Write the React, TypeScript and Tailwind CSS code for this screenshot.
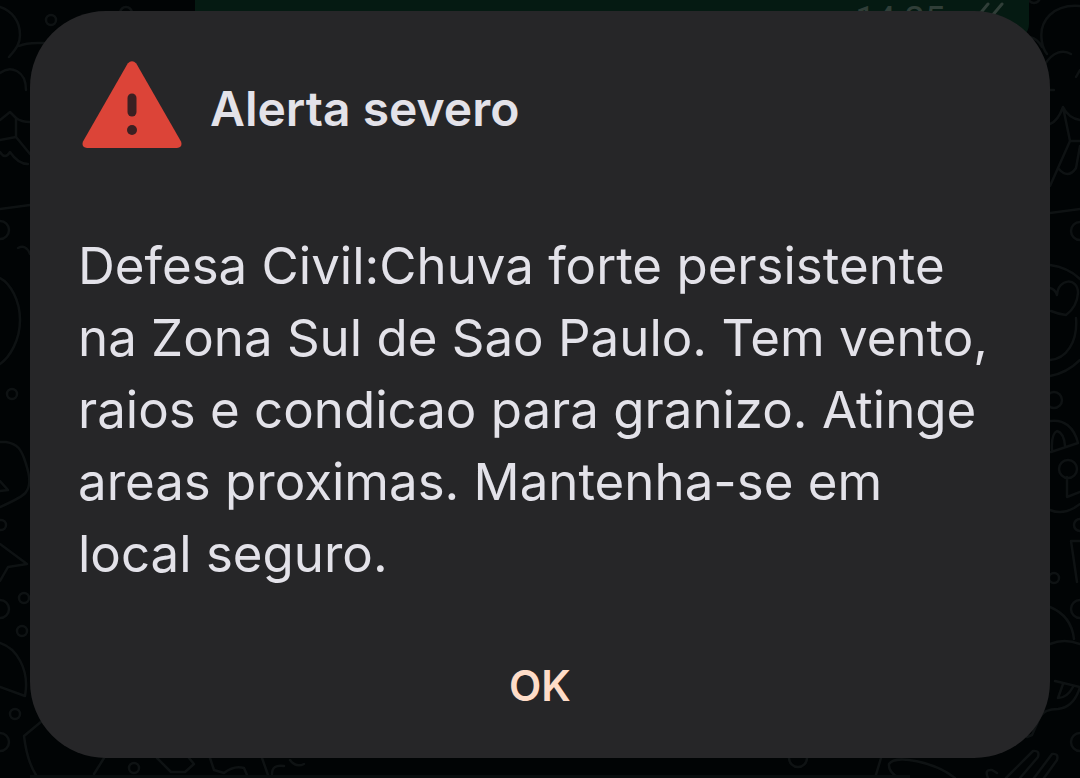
const message =
  "Defesa Civil:Chuva forte persistente na Zona Sul de Sao Paulo. Tem vento, raios e condicao para granizo. Atinge areas proximas. Mantenha-se em local seguro.";

function Wallpaper() {
  return (
    <svg
      className="absolute inset-0 h-full w-full"
      viewBox="0 0 1080 778"
      preserveAspectRatio="xMidYMid slice"
      fill="none"
      stroke="#0e1213"
      strokeWidth="2.5"
      strokeLinecap="round"
      strokeLinejoin="round"
      aria-hidden="true"
    >
      {/* left edge */}
      <path d="M0 7c12 4 20 14 20 28 0 8-3 13-11 22M19 46c8-4 16-3 26-3M0 73c10-8 26-3 26 17" />
      <path d="M0 120l10-8 6 6c4 3 8 4 14 4M16 118v19l14 17M0 140l16-3M0 152q5 8 10 0c4 6 10 12 18 12" />
      <path d="M0 209l30-4M18 248q8-4 12 6M0 278c10 5 20 22 20 42s-10 37-20 44" />
      <path d="M0 442h6c12 2 15 8 18 16 5 14 8 26 2 34q-3 5-26 15M0 481l8 9-8 1M0 544l27 20-19 3-8 14" />
      <path d="M0 643c16 5 30 26 25 53L0 687M42 721l-18 15q3 25 12 39" />
      <circle cx="51" cy="20" r="5" />
      <circle cx="126" cy="13" r="6" />
      <circle cx="0" cy="230" r="9" />
      <circle cx="12" cy="394" r="5" />
      <circle cx="1" cy="525" r="5" />
      <circle cx="24" cy="598" r="5" />
      <circle cx="0" cy="609" r="9" />
      <circle cx="22" cy="631" r="5" />
      <circle cx="15" cy="714" r="5" />
      <circle cx="0" cy="742" r="9" />
      {/* bottom edge */}
      <path d="M104 758l-10 16M157 758l14 14h14l9-8-5-6M210 758l4 12 10 3q10-8 20-5l3 7M262 758l6 17M272 774q0-10 12-8M290 760q6 8 14 4" />
      <path d="M881 758l-6 20M955 778c-20-16-60-24-66-14q-1 8 10 14M988 778q-4-9 4-8l5 3M1006 778l27-27q7-1 5 6l-18 21M1034 778l18-24q7-1 5 6l-13 18" />
      <circle cx="134" cy="768" r="5" />
      <circle cx="798" cy="758" r="9" />
      {/* right edge */}
      <path d="M1080 6c-26-2-42 14-38 36q1 7 5 12M1030 37q8 2 12 10M1045 64c8-12 18-15 26-10M1080 70l-4 7M1050 90h4" />
      <path d="M1050 124q8-3 13-17c4 8 10 12 17 13M1063 107l7 34h10M1070 141l-20 45M1058 168q10 12 18 0l4-22M1050 213l30-4" />
      <path d="M1050 265c14 2 24 8 30 14M1050 376c12-2 22-8 30-16M1050 360c16-1 28-18 26-42M1050 288q5 1 7 7c1-17 21-18 21-2q-1 14-12 22-8-1-15-4" />
      <path d="M1050 421c14-2 24 6 28 22l-27 9M1052 450q-1-16 5-19 7 2 8 15M1067 477v20l13-5M1050 510q12 5 24-2l6-4M1080 541h-9l6 41" />
      <path d="M1050 607c12 5 22 14 24 32M1050 644q14-6 30 0M1055 681l25 6q-6 20-22 22-14 0-18 8l-8 18-5 2M1063 684l-5 14q9 0 15-11" />
      <circle cx="1034" cy="-3" r="6" />
      <circle cx="1080" cy="231" r="9" />
      <circle cx="1054" cy="400" r="8" />
      <circle cx="1068" cy="469" r="9" />
      <circle cx="1080" cy="525" r="6" />
      <circle cx="1054" cy="578" r="5" />
      <circle cx="1080" cy="609" r="9" />
      <circle cx="1080" cy="742" r="9" />
    </svg>
  );
}

function MessageBubble() {
  return (
    <div
      className="absolute top-0 right-[51px] left-[195px] flex h-10 items-start justify-end gap-7 rounded-br-2xl bg-[#051a12] pr-6 text-[#303e38]"
    >
      <span className="font-['Roboto',sans-serif] text-[36px] leading-[40px]">14:25</span>
      <svg width="32" height="36" viewBox="0 0 32 36" fill="none" stroke="currentColor" strokeWidth="3" strokeLinecap="round" aria-hidden="true">
        <path d="M15 4L0 22M29 4L13 23l-5-5" />
      </svg>
    </div>
  );
}

function WarningIcon() {
  return (
    <svg className="shrink-0" width="100" height="88" viewBox="0 0 100 88" aria-hidden="true">
      <path
        d="M45.700 2.500Q50-2 54.300 2.500L99 80.500Q101 86 95 87H5Q-1 86 1 80.500Z"
        fill="#dc4438"
      />
      <rect x="45.500" y="32.500" width="9" height="23" rx="4.500" fill="#3b2022" />
      <circle cx="50" cy="69" r="5" fill="#3b2022" />
    </svg>
  );
}

export default function App() {
  return (
    <main className="relative min-h-screen overflow-hidden bg-[#010405] px-[30px] pt-[11px] pb-5 font-['Inter',sans-serif]">
      <Wallpaper />
      <MessageBubble />
      <div className="absolute right-[170px] bottom-0 left-[30px] h-[3px] bg-[#090e0f]" />

      <div
        role="alertdialog"
        aria-labelledby="alert-title"
        aria-describedby="alert-message"
        className="relative rounded-[76px] bg-[#262628] px-12 pt-[50px] pb-8 text-[#e3e2e9]"
      >
        <header className="flex items-end gap-7 pl-1">
          <WarningIcon />
          <h1 id="alert-title" className="text-[48px] leading-[80px] font-semibold">
            Alerta severo
          </h1>
        </header>

        <p id="alert-message" className="mt-[81px] text-[51px] leading-[72px]">
          {message}
        </p>

        <div className="mt-14 flex justify-center">
          <button type="button" className="px-8 py-3 text-[42px] leading-[56px] font-semibold text-[#fedcc8]">
            OK
          </button>
        </div>
      </div>
    </main>
  );
}
